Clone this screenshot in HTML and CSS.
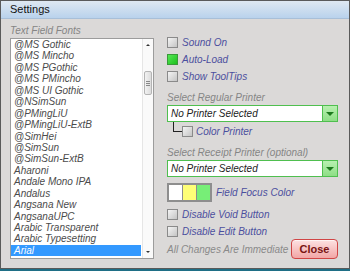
FILE: index.html
```html
<!DOCTYPE html>
<html lang="en">

<head>
    <meta charset="UTF-8">
    <title>Settings</title>
    <link rel="stylesheet" href="styles.css">
</head>

<body>
    <div class="window">
        <div class="titlebar">Settings</div>

        <div class="content">
            <div class="left">
                <div class="caption">Text Field Fonts</div>
                <div class="listbox">
                    <ul class="fonts">
                        <li>@MS Gothic</li>
                        <li>@MS Mincho</li>
                        <li>@MS PGothic</li>
                        <li>@MS PMincho</li>
                        <li>@MS UI Gothic</li>
                        <li>@NSimSun</li>
                        <li>@PMingLiU</li>
                        <li>@PMingLiU-ExtB</li>
                        <li>@SimHei</li>
                        <li>@SimSun</li>
                        <li>@SimSun-ExtB</li>
                        <li>Aharoni</li>
                        <li>Andale Mono IPA</li>
                        <li>Andalus</li>
                        <li>Angsana New</li>
                        <li>AngsanaUPC</li>
                        <li>Arabic Transparent</li>
                        <li>Arabic Typesetting</li>
                        <li class="selected">Arial</li>
                    </ul>
                    <div class="scrollbar">
                        <div class="arrow up"></div>
                        <div class="track">
                            <div class="thumb"><span></span><span></span><span></span></div>
                        </div>
                        <div class="arrow down"></div>
                    </div>
                </div>
            </div>

            <div class="right">
                <label class="check first"><span class="box"></span>Sound On</label>
                <label class="check"><span class="box on"></span>Auto-Load</label>
                <label class="check"><span class="box"></span>Show ToolTips</label>

                <div class="caption gap">Select Regular Printer</div>
                <div class="combo">
                    <span class="value">No Printer Selected</span>
                    <span class="drop"></span>
                </div>
                <div class="sub">
                    <span class="branch"></span>
                    <label class="check"><span class="box"></span>Color Printer</label>
                </div>

                <div class="caption">Select Receipt Printer (optional)</div>
                <div class="combo">
                    <span class="value">No Printer Selected</span>
                    <span class="drop"></span>
                </div>

                <div class="colors">
                    <div class="swatches">
                        <span class="sw white"></span>
                        <span class="sw yellow"></span>
                        <span class="sw green"></span>
                    </div>
                    <span class="link">Field Focus Color</span>
                </div>

                <label class="check"><span class="box"></span>Disable Void Button</label>
                <label class="check"><span class="box"></span>Disable Edit Button</label>

                <div class="footer">
                    <span class="note">All Changes Are Immediate</span>
                    <button class="close">Close</button>
                </div>
            </div>
        </div>
    </div>
</body>

</html>
```

FILE: styles.css
```css
body {
    margin: 0;
    padding: 0;
    font-family: "Liberation Sans", Arial, sans-serif;
    background-color: #1f6f86;
}

.window {
    width: 348px;
    height: 267px;
    border: 1px solid #5a5a5a;
    background-color: #dbd9d8;
    display: flex;
    flex-direction: column;
}

.titlebar {
    height: 17px;
    line-height: 17px;
    padding-left: 9px;
    font-size: 11px;
    color: #111;
    background: linear-gradient(#dfe8f1, #b9d2ec);
    border-bottom: 1px solid #a8bfd8;
}

.content {
    display: flex;
    padding: 4px 11px 0 9px;
}

.left {
    width: 144px;
}

.caption {
    font-size: 10px;
    font-style: italic;
    color: #858585;
    height: 15px;
    line-height: 15px;
}

.listbox {
    display: flex;
    height: 219px;
    border: 1px solid #9c9c9c;
    background-color: #fff;
}

.fonts {
    flex: 1;
    list-style: none;
    margin: 0;
    padding: 0;
    overflow: hidden;
}

.fonts li {
    height: 11.45px;
    line-height: 11.45px;
    padding-left: 3px;
    font-size: 10px;
    font-style: italic;
    color: #4b4b4b;
    white-space: nowrap;
}

.fonts li.selected {
    background-color: #3399ff;
    color: #fff;
    margin-right: 1px;
}

.scrollbar {
    width: 10px;
    display: flex;
    flex-direction: column;
    border-left: 1px solid #e6e6e6;
    background-color: #fafafa;
}

.arrow {
    height: 12px;
    position: relative;
}

.arrow::after {
    content: "";
    position: absolute;
    left: 3px;
    top: 5px;
    border-left: 2px solid transparent;
    border-right: 2px solid transparent;
}

.arrow.up::after {
    border-bottom: 2px solid #333;
}

.arrow.down::after {
    border-top: 2px solid #333;
}

.track {
    flex: 1;
    padding-top: 20px;
}

.thumb {
    height: 22px;
    margin: 0 1px;
    border: 1px solid #b4b4b4;
    border-radius: 2px;
    background: linear-gradient(90deg, #f2f2f2, #dcdcdc);
    display: flex;
    flex-direction: column;
    justify-content: center;
    align-items: center;
    gap: 1px;
}

.thumb span {
    width: 4px;
    height: 1px;
    background-color: #888;
}

.right {
    flex: 1;
    margin-left: 13px;
    display: flex;
    flex-direction: column;
}

.check {
    display: flex;
    align-items: center;
    height: 17px;
    font-size: 10px;
    font-style: italic;
    color: #4b4f9e;
}

.check.first {
    margin-top: 11px;
}

.box {
    width: 9px;
    height: 9px;
    margin-right: 4px;
    border: 1px solid #8a8a8a;
    background: linear-gradient(135deg, #f4f4f4, #c4c4c4);
}

.box.on {
    border-color: #3a9a3a;
    background: linear-gradient(135deg, #55e855, #1ec01e);
}

.caption.gap {
    margin-top: 5px;
}

.combo {
    display: flex;
    height: 15px;
    border: 1px solid #4fbf4f;
    background-color: #fff;
}

.combo .value {
    flex: 1;
    padding-left: 3px;
    font-size: 10px;
    font-style: italic;
    line-height: 15px;
    color: #222;
}

.combo .drop {
    width: 14px;
    background: linear-gradient(#b8f0b0, #8ede86);
    border-left: 1px solid #4fbf4f;
    position: relative;
}

.combo .drop::after {
    content: "";
    position: absolute;
    left: 3px;
    top: 6px;
    border-left: 4px solid transparent;
    border-right: 4px solid transparent;
    border-top: 4px solid #1d7a1d;
}

.sub {
    display: flex;
    align-items: flex-start;
    padding-left: 6px;
    height: 23px;
}

.branch {
    width: 8px;
    height: 9px;
    border-left: 1px solid #222;
    border-bottom: 1px solid #222;
}

.sub .check {
    height: 12px;
    margin-top: 3px;
}

.sub .box {
    margin-right: 3px;
}

.colors {
    display: flex;
    align-items: center;
    margin-top: 6px;
    height: 18px;
    margin-bottom: 5px;
}

.swatches {
    display: flex;
    border: 2px solid #8e8e8e;
    margin-right: 4px;
}

.sw {
    width: 13px;
    height: 15px;
    border-left: 1px solid #8e8e8e;
}

.sw.white {
    border-left: none;
    background-color: #fff;
}

.sw.yellow {
    background-color: #ffff77;
}

.sw.green {
    background-color: #77ee77;
}

.link {
    font-size: 10px;
    font-style: italic;
    color: #4b4f9e;
}

.footer {
    display: flex;
    align-items: center;
    justify-content: space-between;
    margin-top: -1px;
}

.note {
    font-size: 10px;
    font-style: italic;
    color: #8a8a8a;
}

.close {
    width: 47px;
    height: 20px;
    padding: 0;
    font-family: "Liberation Sans", Arial, sans-serif;
    font-size: 11px;
    font-weight: bold;
    color: #7a1414;
    border: 1px solid #d04545;
    border-radius: 4px;
    background: linear-gradient(#fde2e2, #f2a6a6);
    box-shadow: inset 0 1px 0 #fff4f4;
}
```
